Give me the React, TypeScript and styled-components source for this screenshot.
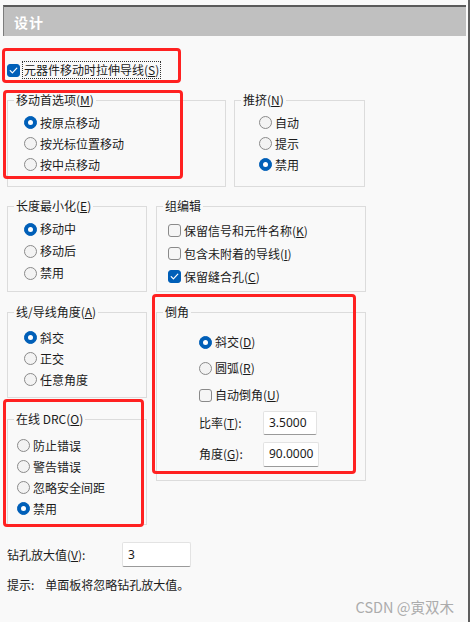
import React from 'react';
import styled, { createGlobalStyle } from 'styled-components';

const GlobalStyle = createGlobalStyle`
  body {
    margin: 0;
    background: #f9f9f9;
  }
`;

const Page = styled.div`
  position: relative;
  box-sizing: border-box;
  width: 470px;
  height: 622px;
  overflow: hidden;
  background: #f9f9f9;
  border-right: 2px solid #5e5e5e;
  font-family: "Noto Sans CJK SC", "Noto Sans", sans-serif;
  font-size: 12px;
  line-height: 16px;
  color: #1b1b1b;
`;

const Header = styled.div`
  box-sizing: border-box;
  height: 31px;
  margin: 5px 2px 0 3px;
  padding-left: 10px;
  display: flex;
  align-items: center;
  background: #c0c0c0;
  border-top: 2px solid #5a5a5a;
  border-left: 1px solid #7c7c7c;
  color: #ffffff;
  font-size: 14px;
  font-weight: bold;
  letter-spacing: 1px;
`;

const Body = styled.div`
  padding-left: 7px;
`;

const StretchRow = styled.div`
  margin-top: 25px;
  height: 18px;
  display: flex;
  align-items: center;
  gap: 2px;
`;

const FocusLabel = styled.span`
  border: 1px dotted #333;
  padding: 0 1px;
  line-height: 16px;
`;

const GroupRow = styled.div<{ $top: number; $gap: number; $align?: string }>`
  display: flex;
  align-items: ${p => p.$align || 'stretch'};
  gap: ${p => p.$gap}px;
  margin-top: ${p => p.$top}px;
`;

const Column = styled.div`
  display: flex;
  flex-direction: column;
  gap: 13px;
`;

const Group = styled.fieldset<{ $w: number }>`
  box-sizing: border-box;
  width: ${p => p.$w}px;
  min-width: 0;
  margin: 0;
  padding: 0;
  border: 1px solid #dcdcdc;
`;

const Legend = styled.legend`
  margin-left: 6px;
  padding: 0 2px;
  font-size: 12px;
  line-height: 16px;
`;

const Items = styled.div<{ $pl: number; $pt: number; $pb: number }>`
  display: flex;
  flex-direction: column;
  padding: ${p => p.$pt}px 0 ${p => p.$pb}px ${p => p.$pl}px;
`;

const Item = styled.div<{ $h: number; $mt?: number }>`
  display: flex;
  align-items: center;
  gap: 3px;
  height: ${p => p.$h}px;
  margin-top: ${p => p.$mt || 0}px;
  white-space: nowrap;
`;

const RadioDot = styled.span<{ $on?: boolean }>`
  box-sizing: border-box;
  flex: none;
  width: 13px;
  height: 13px;
  border-radius: 50%;
  background: ${p => (p.$on ? '#005fb8' : '#f3f3f3')};
  border: 1px solid ${p => (p.$on ? '#005fb8' : '#8a8a8a')};
  display: flex;
  align-items: center;
  justify-content: center;

  &::after {
    content: '';
    display: ${p => (p.$on ? 'block' : 'none')};
    width: 5px;
    height: 5px;
    border-radius: 50%;
    background: #ffffff;
  }
`;

const CheckBox = styled.span<{ $on?: boolean }>`
  box-sizing: border-box;
  flex: none;
  width: 13px;
  height: 13px;
  border-radius: 3px;
  background: ${p => (p.$on ? '#005fb8' : '#f5f5f5')};
  border: 1px solid ${p => (p.$on ? '#005fb8' : '#8a8a8a')};
  display: flex;
  align-items: center;
  justify-content: center;
`;

const FieldRow = styled.div<{ $mt: number }>`
  display: flex;
  align-items: center;
  height: 24px;
  margin-top: ${p => p.$mt}px;
`;

const FieldLabel = styled.span<{ $w: number }>`
  width: ${p => p.$w}px;
  flex: none;
`;

const TextBox = styled.div<{ $w: number; $h: number }>`
  box-sizing: border-box;
  width: ${p => p.$w}px;
  height: ${p => p.$h}px;
  padding-left: 5px;
  display: flex;
  align-items: center;
  background: #ffffff;
  border: 1px solid #e3e3e3;
  border-bottom-color: #9a9a9a;
  border-radius: 2px;
  font-family: "Noto Sans", "Noto Sans CJK SC", sans-serif;
  font-size: 12px;
`;

const DrillRow = styled.div`
  display: flex;
  align-items: center;
  margin-top: 17px;
  height: 25px;
`;

const Hint = styled.div`
  margin-top: 10px;
  display: flex;
  gap: 11px;
`;

const Watermark = styled.div`
  margin-top: 5px;
  padding-right: 14px;
  text-align: right;
  font-size: 14.5px;
  line-height: 18px;
  color: #acacac;
`;

const Mark = styled.div<{ $x: number; $y: number; $w: number; $h: number }>`
  position: absolute;
  box-sizing: border-box;
  left: ${p => p.$x}px;
  top: ${p => p.$y}px;
  width: ${p => p.$w}px;
  height: ${p => p.$h}px;
  border: 3px solid #ff2121;
  border-radius: 4px;
  pointer-events: none;
`;

const Tick = () => (
  <svg width="11" height="11" viewBox="0 0 11 11">
    <polyline points="2.2,5.6 4.4,7.8 8.8,3.2" fill="none" stroke="#ffffff" strokeWidth="1.2" strokeLinecap="round" strokeLinejoin="round" />
  </svg>
);

const Key = ({ k }: { k: string }) => (
  <>
    (<u>{k}</u>)
  </>
);

const Radio = ({ on, h, mt, children }: { on?: boolean; h: number; mt?: number; children: React.ReactNode }) => (
  <Item $h={h} $mt={mt}>
    <RadioDot $on={on} />
    <span>{children}</span>
  </Item>
);

const Check = ({ on, h, mt, children }: { on?: boolean; h: number; mt?: number; children: React.ReactNode }) => (
  <Item $h={h} $mt={mt}>
    <CheckBox $on={on}>{on && <Tick />}</CheckBox>
    <span>{children}</span>
  </Item>
);

export default function App() {
  return (
    <>
      <GlobalStyle />
      <Page>
        <Header>设计</Header>
        <Body>
          <StretchRow>
            <CheckBox $on>
              <Tick />
            </CheckBox>
            <FocusLabel>
              元器件移动时拉伸导线<Key k="S" />
            </FocusLabel>
          </StretchRow>

          <GroupRow $top={13} $gap={8}>
            <Group $w={219}>
              <Legend>
                移动首选项<Key k="M" />
              </Legend>
              <Items $pl={16} $pt={4} $pb={11}>
                <Radio on h={21}>按原点移动</Radio>
                <Radio h={21}>按光标位置移动</Radio>
                <Radio h={21}>按中点移动</Radio>
              </Items>
            </Group>
            <Group $w={131}>
              <Legend>
                推挤<Key k="N" />
              </Legend>
              <Items $pl={24} $pt={4} $pb={11}>
                <Radio h={21}>自动</Radio>
                <Radio h={21}>提示</Radio>
                <Radio on h={21}>禁用</Radio>
              </Items>
            </Group>
          </GroupRow>

          <GroupRow $top={11} $gap={9}>
            <Group $w={140}>
              <Legend>
                长度最小化<Key k="E" />
              </Legend>
              <Items $pl={16} $pt={4} $pb={7}>
                <Radio on h={22}>移动中</Radio>
                <Radio h={22}>移动后</Radio>
                <Radio h={22}>禁用</Radio>
              </Items>
            </Group>
            <Group $w={210}>
              <Legend>组编辑</Legend>
              <Items $pl={11} $pt={5} $pb={3}>
                <Check h={23}>
                  保留信号和元件名称<Key k="K" />
                </Check>
                <Check h={23}>
                  包含未附着的导线<Key k="I" />
                </Check>
                <Check on h={23}>
                  保留缝合孔<Key k="C" />
                </Check>
              </Items>
            </Group>
          </GroupRow>

          <GroupRow $top={12} $gap={9} $align="flex-start">
            <Column>
              <Group $w={140}>
                <Legend>
                  线/导线角度<Key k="A" />
                </Legend>
                <Items $pl={16} $pt={7} $pb={7}>
                  <Radio on h={21}>斜交</Radio>
                  <Radio h={21}>正交</Radio>
                  <Radio h={21}>任意角度</Radio>
                </Items>
              </Group>
              <Group $w={140}>
                <Legend>
                  在线 DRC<Key k="O" />
                </Legend>
                <Items $pl={9} $pt={8} $pb={5}>
                  <Radio h={21}>防止错误</Radio>
                  <Radio h={21}>警告错误</Radio>
                  <Radio h={21}>忽略安全间距</Radio>
                  <Radio on h={21}>禁用</Radio>
                </Items>
              </Group>
            </Column>
            <Group $w={210}>
              <Legend>倒角</Legend>
              <Items $pl={42} $pt={12} $pb={14}>
                <Radio on h={20}>
                  斜交<Key k="D" />
                </Radio>
                <Radio h={20} mt={6}>
                  圆弧<Key k="R" />
                </Radio>
                <Check h={20} mt={7}>
                  自动倒角<Key k="U" />
                </Check>
                <FieldRow $mt={6}>
                  <FieldLabel $w={64}>
                    比率<Key k="T" />:
                  </FieldLabel>
                  <TextBox $w={54} $h={24}>3.5000</TextBox>
                </FieldRow>
                <FieldRow $mt={7}>
                  <FieldLabel $w={64}>
                    角度<Key k="G" />:
                  </FieldLabel>
                  <TextBox $w={56} $h={25}>90.0000</TextBox>
                </FieldRow>
              </Items>
            </Group>
          </GroupRow>

          <DrillRow>
            <FieldLabel $w={115}>
              钻孔放大值<Key k="V" />:
            </FieldLabel>
            <TextBox $w={69} $h={25}>3</TextBox>
          </DrillRow>
          <Hint>
            <span>提示:</span>
            <span>单面板将忽略钻孔放大值。</span>
          </Hint>
        </Body>
        <Watermark>CSDN @寅双木</Watermark>

        <Mark $x={2} $y={48} $w={179} $h={35} />
        <Mark $x={3} $y={90} $w={180} $h={89} />
        <Mark $x={152} $y={294} $w={204} $h={180} />
        <Mark $x={3} $y={399} $w={141} $h={128} />
      </Page>
    </>
  );
}
